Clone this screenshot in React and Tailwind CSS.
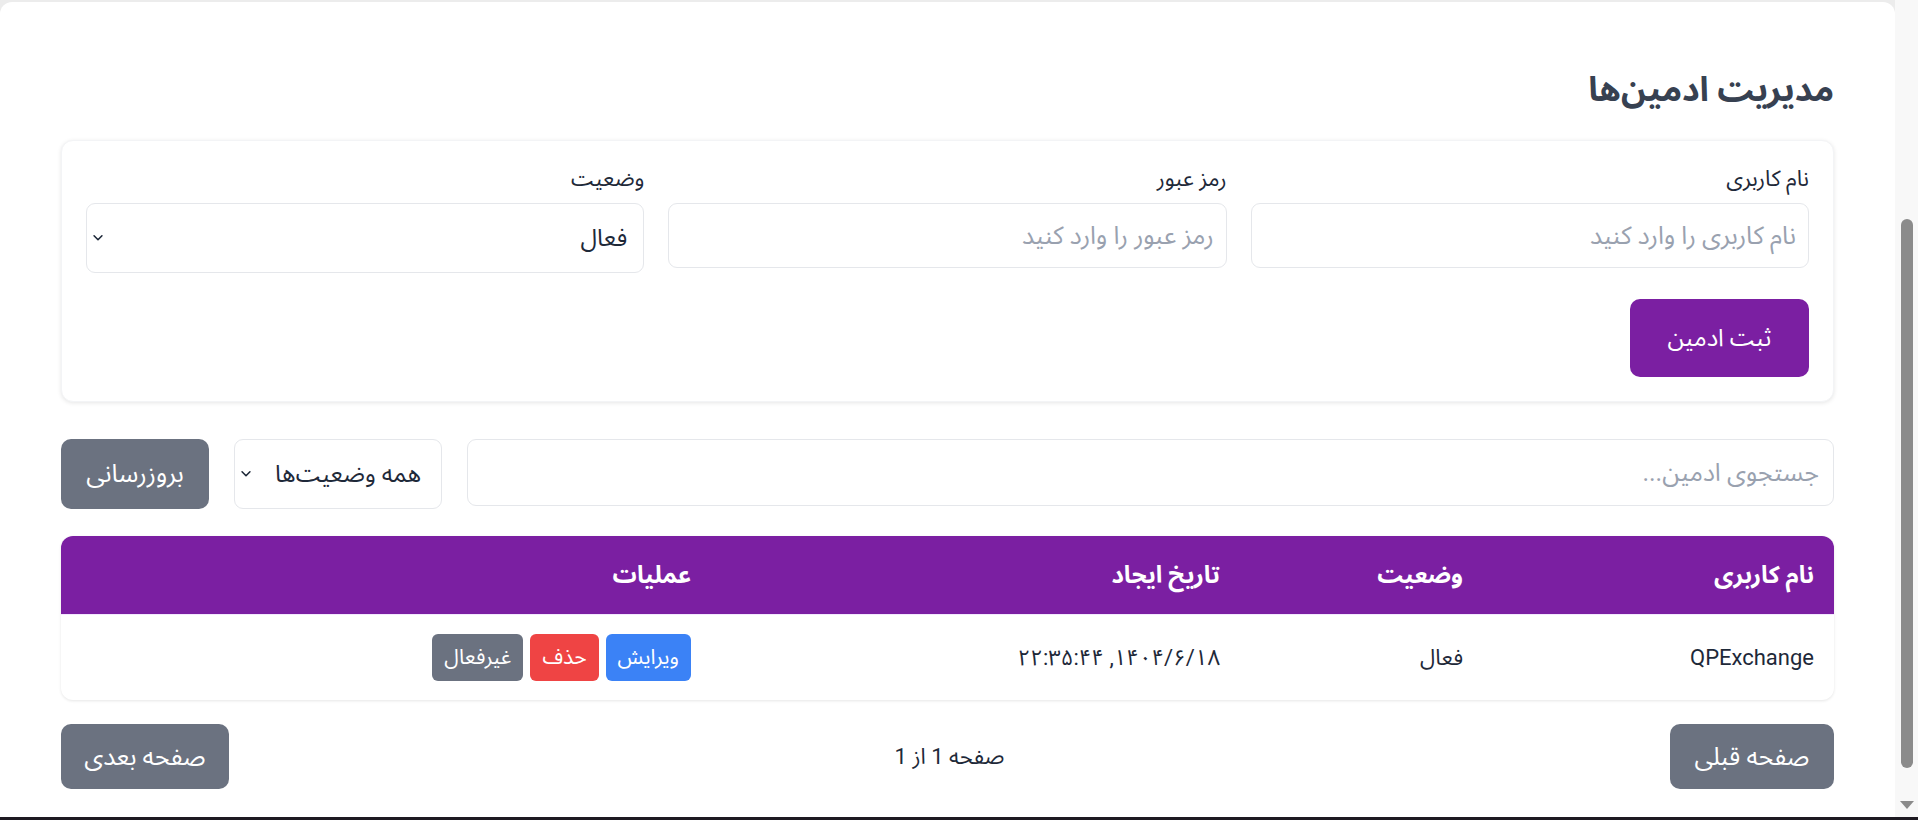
import { useState } from "react";

const admins = [
  { id: 1, username: "QPExchange", status: "فعال", createdAt: "۱۴۰۴/۶/۱۸, ۲۲:۳۵:۴۴" },
];

function Chevron() {
  return (
    <svg
      viewBox="0 0 12 8"
      className="pointer-events-none absolute left-[6px] top-1/2 h-[7px] w-[12px] -translate-y-1/2 text-gray-800"
      fill="none"
      stroke="currentColor"
      strokeWidth="1.8"
      strokeLinecap="round"
      strokeLinejoin="round"
    >
      <path d="M1.5 1.5 6 6l4.5-4.5" />
    </svg>
  );
}

export default function App() {
  const [form, setForm] = useState({ username: "", password: "", status: "active" });
  const [search, setSearch] = useState("");
  const [filter, setFilter] = useState("all");

  const handleChange = (e) => {
    const { name, value } = e.target;
    setForm({ ...form, [name]: value });
  };

  return (
    <div className="flex h-[820px] flex-col overflow-hidden bg-[#ececec] text-gray-700 [font-family:Roboto,'Noto_Sans_Arabic','DejaVu_Sans',sans-serif]">
      <div className="flex min-h-0 flex-1">
        <div className="flex min-w-0 flex-1 flex-col pt-[2px]">
          <main dir="rtl" className="flex-1 rounded-t-xl bg-white px-[61px] pt-[67px]">
            <h1 className="text-[34px] font-bold leading-[40px] text-[#374151]">مدیریت ادمین‌ها</h1>

            {/* create admin */}
            <div className="mt-[31px] rounded-xl border border-gray-100 bg-white p-6 shadow-[0_1px_4px_rgba(0,0,0,0.1)]">
              <div className="grid grid-cols-3 items-start gap-6">
                <div>
                  <label htmlFor="username" className="mb-[10px] block text-[22px] leading-[28px] text-gray-800">
                    نام کاربری
                  </label>
                  <input
                    id="username"
                    name="username"
                    value={form.username}
                    onChange={handleChange}
                    placeholder="نام کاربری را وارد کنید"
                    className="block h-[65px] w-full rounded-[9px] border border-gray-200 px-3 text-[25px] outline-none placeholder:text-gray-400"
                  />
                </div>
                <div>
                  <label htmlFor="password" className="mb-[10px] block text-[22px] leading-[28px] text-gray-800">
                    رمز عبور
                  </label>
                  <input
                    id="password"
                    name="password"
                    type="password"
                    value={form.password}
                    onChange={handleChange}
                    placeholder="رمز عبور را وارد کنید"
                    className="block h-[65px] w-full rounded-[9px] border border-gray-200 px-3 text-[25px] outline-none placeholder:text-gray-400"
                  />
                </div>
                <div>
                  <label htmlFor="status" className="mb-[10px] block text-[22px] leading-[28px] text-gray-800">
                    وضعیت
                  </label>
                  <div className="relative">
                    <select
                      id="status"
                      name="status"
                      value={form.status}
                      onChange={handleChange}
                      className="block h-[70px] w-full appearance-none rounded-[9px] border border-gray-200 bg-white pr-4 text-[24px] text-gray-800 outline-none"
                    >
                      <option value="active">فعال</option>
                      <option value="inactive">غیرفعال</option>
                    </select>
                    <Chevron />
                  </div>
                </div>
              </div>
              <button className="mt-[26px] h-[78px] w-[179px] rounded-[10px] bg-[#7b1fa2] text-[24px] text-white">
                ثبت ادمین
              </button>
            </div>

            {/* filters */}
            <div className="mt-[37px] flex items-start gap-[25px]">
              <input
                value={search}
                onChange={(e) => setSearch(e.target.value)}
                placeholder="جستجوی ادمین..."
                className="h-[67px] min-w-0 flex-1 rounded-[9px] border border-gray-200 px-[14px] text-[25px] outline-none placeholder:text-gray-400"
              />
              <div className="relative w-[208px]">
                <select
                  value={filter}
                  onChange={(e) => setFilter(e.target.value)}
                  className="block h-[70px] w-full appearance-none rounded-[9px] border border-gray-200 bg-white pr-5 text-[24px] text-gray-800 outline-none"
                >
                  <option value="all">همه وضعیت‌ها</option>
                  <option value="active">فعال</option>
                  <option value="inactive">غیرفعال</option>
                </select>
                <Chevron />
              </div>
              <button className="h-[70px] w-[148px] rounded-[10px] bg-[#6b7280] text-[25px] text-white">
                بروزرسانی
              </button>
            </div>

            {/* list */}
            <div className="mt-[27px] overflow-hidden rounded-xl bg-white shadow-[0_1px_3px_rgba(0,0,0,0.1)]">
              <table className="w-full table-fixed border-collapse">
                <colgroup>
                  <col className="w-[351px]" />
                  <col className="w-[243px]" />
                  <col className="w-[529px]" />
                  <col />
                </colgroup>
                <thead>
                  <tr className="border-b border-[#f3e8ff] bg-[#7b1fa2] text-white">
                    <th className="h-[78px] px-5 text-right text-[24px] font-bold">نام کاربری</th>
                    <th className="h-[78px] px-5 text-right text-[24px] font-bold">وضعیت</th>
                    <th className="h-[78px] px-5 text-right text-[24px] font-bold">تاریخ ایجاد</th>
                    <th className="h-[78px] px-5 text-right text-[24px] font-bold">عملیات</th>
                  </tr>
                </thead>
                <tbody>
                  {admins.map((a) => (
                    <tr key={a.id} className="text-gray-800">
                      <td className="h-[86px] px-5 text-[22px]">{a.username}</td>
                      <td className="h-[86px] px-5 text-[22px]">{a.status}</td>
                      <td className="h-[86px] px-5 text-[22px]">{a.createdAt}</td>
                      <td className="h-[86px] px-5">
                        <div className="flex gap-[7px]">
                          <button className="h-[47px] rounded-md bg-[#3b82f6] px-3 text-[21px] text-white">ویرایش</button>
                          <button className="h-[47px] rounded-md bg-[#ef4444] px-3 text-[21px] text-white">حذف</button>
                          <button className="h-[47px] rounded-md bg-[#6b7280] px-3 text-[21px] text-white">غیرفعال</button>
                        </div>
                      </td>
                    </tr>
                  ))}
                </tbody>
              </table>
            </div>

            {/* pagination */}
            <div className="mt-6 flex items-center justify-between">
              <button className="h-[65px] w-[164px] rounded-[10px] bg-[#6b7280] text-[25px] text-white">صفحه قبلی</button>
              <span className="text-[22px] text-gray-800">صفحه 1 از 1</span>
              <button className="h-[65px] w-[168px] rounded-[10px] bg-[#6b7280] text-[25px] text-white">صفحه بعدی</button>
            </div>
          </main>
        </div>

        {/* page scrollbar */}
        <div className="flex w-[23px] flex-col items-center bg-[#f8f8f8] pb-[8px] pl-[1px]">
          <div className="mt-[219px] h-[549px] w-[12px] rounded-full bg-[#8b8b8b]" />
          <div className="mt-auto h-0 w-0 border-x-[7px] border-t-[8px] border-x-transparent border-t-[#8b8b8b]" />
        </div>
      </div>
      <div className="h-[3px] bg-[#1e1a22]" />
    </div>
  );
}
